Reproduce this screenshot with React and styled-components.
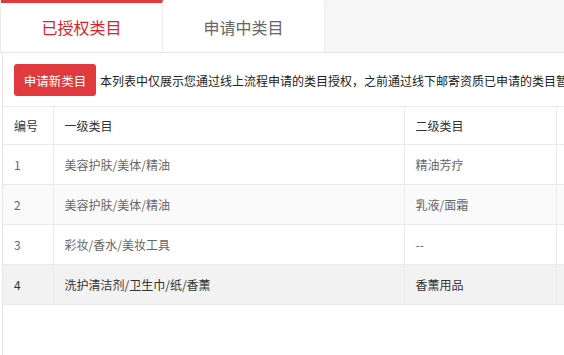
import React from "react";
import styled, { createGlobalStyle } from "styled-components";

const Global = createGlobalStyle`
  html, body { margin: 0; padding: 0; background: #fff; }
  body {
    font-family: "Microsoft YaHei", "Noto Sans CJK SC", "Noto Sans", sans-serif;
    overflow: hidden;
  }
`;

const Page = styled.div`
  width: 564px;
  height: 355px;
  overflow: hidden;
  background: #fff;
  display: flex;
  flex-direction: column;
`;

const TabBar = styled.div`
  display: flex;
  height: 53px;
  flex: none;
  background: #f6f6f6;
  border-bottom: 1px solid #e6e6e6;
  box-sizing: border-box;
  border-left: 1px solid #ececec;
`;

const Tab = styled.div`
  width: 162px;
  flex: none;
  box-sizing: border-box;
  background: #fff;
  display: flex;
  align-items: center;
  justify-content: center;
  font-size: 16px;
  color: ${(p) => (p.$active ? "#d8222a" : "#666")};
  border-top: 3px solid ${(p) => (p.$active ? "#e0393e" : "transparent")};
  border-right: 1px solid #ececec;
  padding-bottom: 1px;
`;

const Panel = styled.div`
  flex: 1;
  margin-left: 2px;
  border-left: 1px solid #e6e6e6;
  display: flex;
  flex-direction: column;
  overflow: hidden;
`;

const Toolbar = styled.div`
  display: flex;
  align-items: center;
  gap: 4px;
  padding: 11px 0 10px 11px;
  white-space: nowrap;
`;

const Button = styled.button`
  height: 32px;
  width: 82px;
  padding: 0;
  border: none;
  border-radius: 3px;
  background: #e0393e;
  color: #fff;
  font-family: inherit;
  font-size: 12.5px;
  flex: none;
  cursor: pointer;
`;

const Note = styled.span`
  font-size: 12px;
  color: #222;
`;

const Table = styled.table`
  width: 700px;
  border-collapse: collapse;
  table-layout: fixed;
  font-size: 12px;
  border-top: 1px solid #eaeaea;
`;

const Th = styled.th`
  width: ${(p) => p.$w}px;
  height: 38px;
  padding: 0 0 0 11px;
  text-align: left;
  font-weight: normal;
  color: #333;
  border-right: 1px solid #eaeaea;
  border-bottom: 1px solid #eaeaea;
  box-sizing: border-box;
`;

const Tr = styled.tr`
  background: ${(p) => (p.$hover ? "#f2f2f2" : p.$alt ? "#fafafa" : "#fff")};
  color: ${(p) => (p.$hover ? "#333" : "#666")};
`;

const Td = styled.td`
  height: 39px;
  padding: 0 0 0 11px;
  border-right: 1px solid #eaeaea;
  border-bottom: 1px solid #eaeaea;
  white-space: nowrap;
  overflow: hidden;
`;

const rows = [
  ["1", "美容护肤/美体/精油", "精油芳疗", ""],
  ["2", "美容护肤/美体/精油", "乳液/面霜", ""],
  ["3", "彩妆/香水/美妆工具", "--", ""],
  ["4", "洗护清洁剂/卫生巾/纸/香薰", "香薰用品", ""],
];

export default function App() {
  return (
    <Page>
      <Global />
      <TabBar>
        <Tab $active>已授权类目</Tab>
        <Tab>申请中类目</Tab>
      </TabBar>
      <Panel>
        <Toolbar>
          <Button>申请新类目</Button>
          <Note>
            本列表中仅展示您通过线上流程申请的类目授权，之前通过线下邮寄资质已申请的类目暂不在此列表中展示
          </Note>
        </Toolbar>
        <Table>
          <thead>
            <tr>
              <Th $w={50}>编号</Th>
              <Th $w={351}>一级类目</Th>
              <Th $w={152}>二级类目</Th>
              <Th $w={147}></Th>
            </tr>
          </thead>
          <tbody>
            {rows.map((r, i) => (
              <Tr key={r[0]} $alt={i % 2 === 1} $hover={i === 3}>
                {r.map((c, j) => (
                  <Td key={j}>{c}</Td>
                ))}
              </Tr>
            ))}
          </tbody>
        </Table>
      </Panel>
    </Page>
  );
}
